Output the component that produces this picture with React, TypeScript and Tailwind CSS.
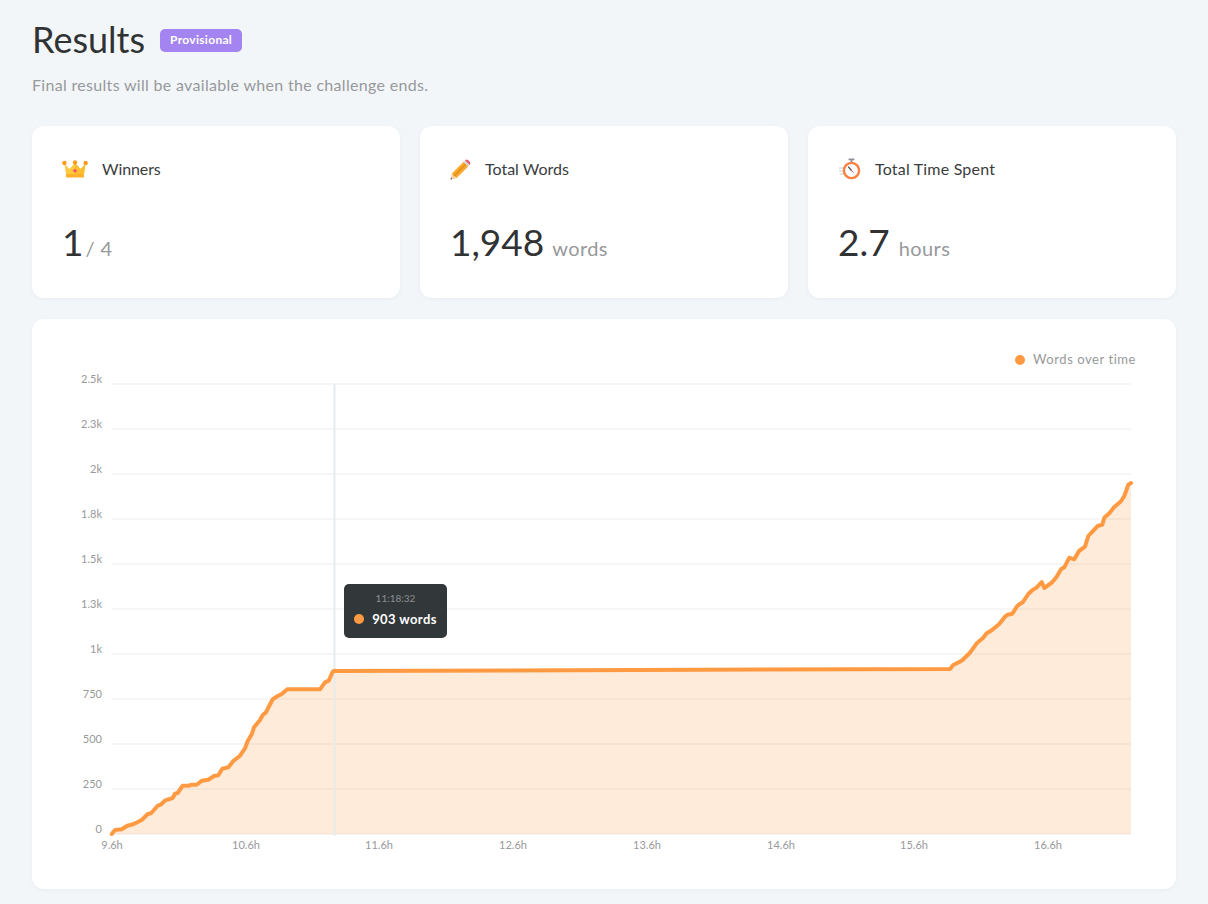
import React from 'react';

const FONT = { fontFamily: 'Lato, "Open Sans", sans-serif' };

// traced from the reference, in page pixels
const early = [[65,582],[75,570],[95,568],[112,557],[130,553],[155,540],[172,523],[183,520],[203,497],[212,494],[226,481],[248,474],[255,461],[263,459],[278,437],[297,437],[305,434],[320,434],[335,422],[355,419],[372,408],[385,406],[397,386],[415,382],[430,363],[450,347],[465,325],[473,303],[485,283],[492,262],[510,240],[518,225],[527,218],[548,178],[565,167],[575,162],[592,148],[690,148],[705,127],[716,122],[728,95],[733,92]].map(([x, y]) => [90 + x / 3, 640 + y / 3]);
const late = [[60,597],[70,585],[95,572],[120,548],[140,520],[158,505],[170,490],[185,481],[207,463],[225,440],[233,434],[247,431],[260,410],[268,403],[278,397],[295,372],[305,362],[320,352],[335,336],[343,354],[365,338],[380,320],[393,298],[403,292],[418,263],[433,268],[447,243],[465,230],[475,198],[485,187],[503,168],[517,164],[523,143],[538,130],[552,112],[573,94],[583,78],[595,44],[603,39]].map(([x, y]) => [930 + x / 3, 470 + y / 3]);
const points = [...early, [336, 671], ...late];
const line = points.map(([x, y]) => `${x.toFixed(1)},${y.toFixed(1)}`).join(' ');
const area = `112,834 ${line} 1131,834`;

const yTicks = ['2.5k', '2.3k', '2k', '1.8k', '1.5k', '1.3k', '1k', '750', '500', '250', '0'];
const xTicks = [['9.6h', 112], ['10.6h', 246], ['11.6h', 379], ['12.6h', 513], ['13.6h', 647], ['14.6h', 781], ['15.6h', 914], ['16.6h', 1048]] as const;

function Crown() {
  return (
    <svg width="26" height="18" viewBox="0 0 26 18">
      <path d="M2.5 4 L7.5 9 L13 3 L18.5 9 L23.5 4 L22 14 H4 Z" fill="#ffc93e" />
      <path d="M13 3 L18.5 9 L23.5 4 L22 14 H13 Z" fill="#ffbe2e" />
      <rect x="4" y="14" width="18" height="3.5" rx="0.5" fill="#fdb02c" />
      <circle cx="2.4" cy="3" r="2.2" fill="#ff9a1f" />
      <circle cx="13" cy="2.4" r="2.2" fill="#ff9a1f" />
      <circle cx="23.6" cy="3" r="2.2" fill="#ff9a1f" />
      <path d="M13 8.6 L15.2 10.8 L13 13 L10.8 10.8 Z" fill="#ef5a6f" />
    </svg>
  );
}

function Pencil() {
  return (
    <svg width="21" height="21" viewBox="0 0 21 21">
      <path d="M0.5 20.5 L1.8 14.6 L6.4 19.2 Z" fill="#f6d3a8" />
      <path d="M0.5 20.5 L1 18.4 L2.6 20 Z" fill="#555" />
      <path d="M1.8 14.6 L13.6 2.8 L18.2 7.4 L6.4 19.2 Z" fill="#f8a92e" />
      <path d="M4.1 16.9 L15.9 5.1" stroke="#e58a14" strokeWidth="1.4" />
      <path d="M15 1.4 Q16.4 0 18 1 L20 3 Q21 4.6 19.6 6 Z" fill="#e9575f" />
      <path d="M13.4 3 L15 1.4 L19.6 6 L18 7.6 Z" fill="#cfd2d6" />
    </svg>
  );
}

function Stopwatch() {
  return (
    <svg width="22" height="22" viewBox="0 0 22 22">
      <rect x="9.5" y="0.5" width="6" height="1.8" rx="0.9" fill="#8d9197" />
      <rect x="11.6" y="2" width="1.8" height="2.5" fill="#8d9197" />
      <path d="M0.5 10 H5 M0 13 H5 M1.5 16 H6" stroke="#e2e5e8" strokeWidth="2" strokeLinecap="round" />
      <circle cx="12.5" cy="12.5" r="7.6" fill="#fff" stroke="#fb7f3e" strokeWidth="2.4" />
      <path d="M12.5 12.5 L9.5 9" stroke="#555" strokeWidth="1.2" strokeLinecap="round" />
      <path d="M12.5 12.5 L14.5 14.5" stroke="#ef5a4f" strokeWidth="1" strokeLinecap="round" />
    </svg>
  );
}

function StatCard({ icon, label, value, unit, gap, shift, unitGap, labelClass = '' }: { icon: React.ReactNode; label: string; value: string; unit: string; gap: string; shift: string; unitGap: string; labelClass?: string }) {
  return (
    <div className="w-[368px] h-[172px] rounded-xl bg-white shadow-[0_1px_4px_rgba(30,50,80,0.05)] px-[30px] pt-[31px]">
      <div className={`flex items-center h-[24px] text-[16px] text-[#3a3c3e] ${gap}`}>
        <span className={`w-[26px] flex items-center justify-center shrink-0 ${shift}`}>{icon}</span>
        <span className={labelClass}>{label}</span>
      </div>
      <div className={`flex items-baseline mt-[35px] ${unitGap}`}>
        <span className="text-[37px] leading-[52px] text-[#303234]">{value}</span>
        <span className="text-[20px] text-[#97999b] tracking-[0.4px]">{unit}</span>
      </div>
    </div>
  );
}

export default function App() {
  return (
    <div className="min-h-[904px] bg-[#f3f6f9] px-[32px] pt-[15px]" style={FONT}>
      <div className="flex items-center gap-[15px] h-[48px]">
        <h1 className="text-[36px] leading-[48px] text-[#303234]">Results</h1>
        <span className="rounded-[5px] bg-[#a484f0] text-white text-[12px] font-bold tracking-[0.3px] h-[23px] px-[10px] mt-[2px] flex items-center">Provisional</span>
      </div>
      <p className="mt-[10px] text-[16px] leading-[24px] text-[#97999b] tracking-[0.31px]">Final results will be available when the challenge ends.</p>

      <div className="flex gap-[20px] mt-[29px]">
        <StatCard icon={<Crown />} label="Winners" value="1" unit="/ 4" gap="gap-[14px]" shift="" unitGap="gap-[2px]" labelClass="tracking-[-0.1px]" />
        <StatCard icon={<Pencil />} label="Total Words" value="1,948" unit="words" gap="gap-[9px]" shift="-translate-x-[3px]" unitGap="gap-[8px]" />
        <StatCard icon={<Stopwatch />} label="Total Time Spent" value="2.7" unit="hours" gap="gap-[11px]" shift="-translate-x-[1px]" unitGap="gap-[9px]" labelClass="tracking-[0.2px]" />
      </div>

      <div className="relative mt-[21px] w-[1144px] h-[570px] rounded-xl bg-white shadow-[0_1px_4px_rgba(30,50,80,0.05)]">
        <div className="flex items-center justify-end gap-[8px] h-[22px] pt-[30px] pr-[40px] box-content text-[13px] tracking-[0.56px] text-[#97999b]">
          <span className="w-[10px] h-[10px] rounded-full bg-[#ff9a42]" />
          <span>Words over time</span>
        </div>
        <svg className="block" width="1144" height="518" viewBox="32 371 1144 518">
          {yTicks.map((t, i) => (
            <g key={t}>
              <line x1="112" x2="1131" y1={384 + i * 45} y2={384 + i * 45} stroke="#f3f3f4" strokeWidth="1.5" />
              <text x="102" y={383 + i * 45} textAnchor="end" fontSize="11" fill="#97999b">{t}</text>
            </g>
          ))}
          {xTicks.map(([t, x]) => (
            <text key={t} x={x} y="849" textAnchor="middle" fontSize="11" fill="#97999b">{t}</text>
          ))}
          <polygon points={area} fill="#ff9a42" fillOpacity="0.2" />
          <line x1="334.5" x2="334.5" y1="384" y2="836" stroke="#e8ebee" strokeWidth="2" />
          <polyline points={line} fill="none" stroke="#ff9a42" strokeWidth="4" strokeLinejoin="round" strokeLinecap="round" />
        </svg>
        <div className="absolute left-[312px] top-[265px] w-[103px] h-[54px] rounded-[5px] bg-[#32373a] flex flex-col items-center pt-[6px]">
          <span className="text-[10px] leading-[16px] text-[#8c9092]">11:18:32</span>
          <span className="flex items-center gap-[8px] mt-[4px] text-[13px] leading-[18px] font-bold text-white tracking-[0.4px]">
            <span className="w-[10px] h-[10px] rounded-full bg-[#ff9a42]" />
            903 words
          </span>
        </div>
      </div>
    </div>
  );
}
